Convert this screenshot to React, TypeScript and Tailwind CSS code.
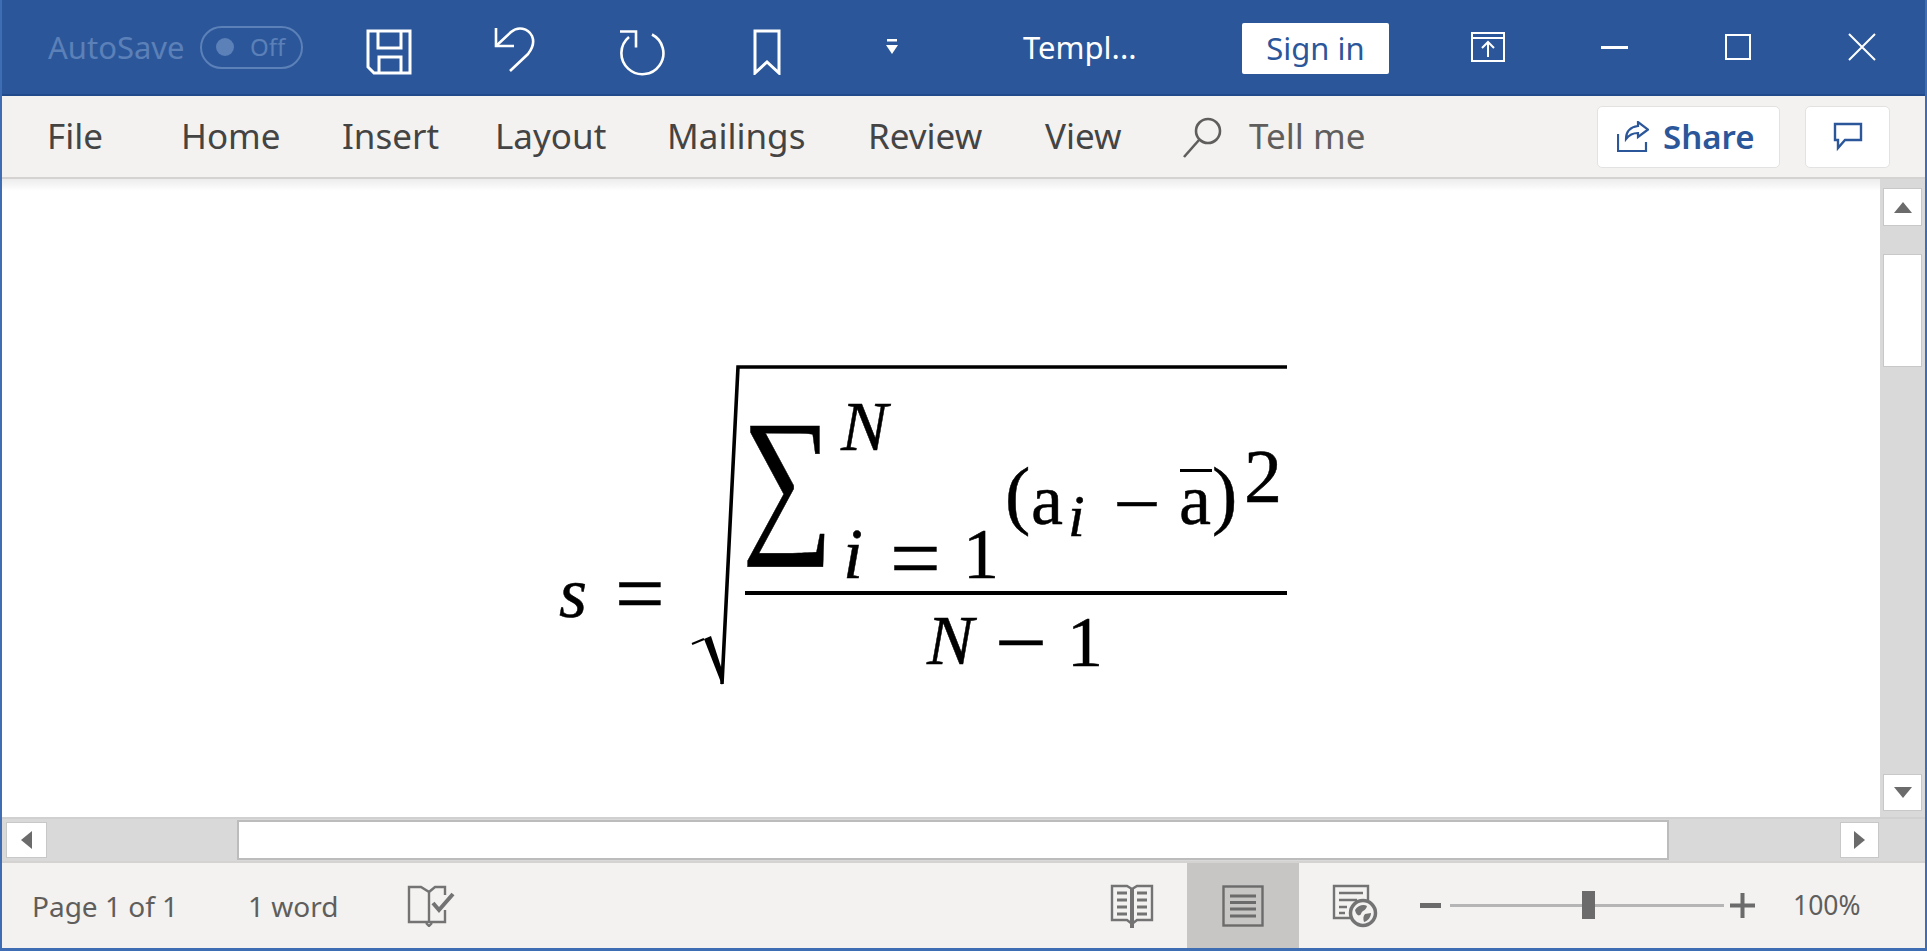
import React from 'react';

const ui = "font-['Noto_Sans','Open_Sans',sans-serif]";
const math = "absolute leading-none text-black font-['Liberation_Serif',serif] [-webkit-text-stroke:0.5px_black]";

const SaveIcon = () => (
  <svg width="46" height="46" viewBox="0 0 46 46" fill="none" stroke="white" strokeWidth="3">
    <path d="M2 2H44V44H8L2 38Z" />
    <path d="M12 2V19H35V2" />
    <path d="M13 44V28H35V44" />
  </svg>
);

const UndoIcon = () => (
  <svg width="46" height="50" viewBox="0 0 46 50" fill="none" stroke="white" strokeWidth="2.6">
    <path d="M4 3V21H22" />
    <path d="M4 21L19 7C26 1 36 3 40 11C43 18 40 24 36 29L18 46" />
  </svg>
);

const RedoIcon = () => (
  <svg width="48" height="50" viewBox="0 0 48 50" fill="none" stroke="white" strokeWidth="2.6">
    <path d="M2 5.5H18V21.5" />
    <path d="M11 11A21 21 0 1 0 34 8.5" />
  </svg>
);

const BookmarkIcon = () => (
  <svg width="28" height="46" viewBox="0 0 28 46" fill="none" stroke="white" strokeWidth="3">
    <path d="M2 2H26V44L14 33L2 44Z" />
  </svg>
);

const QuickDropIcon = () => (
  <svg width="12" height="16" viewBox="0 0 12 16" fill="white">
    <rect x="1" y="0" width="10" height="2.5" />
    <path d="M0 6H12L6 15Z" />
  </svg>
);

const RestoreIcon = () => (
  <svg width="34" height="30" viewBox="0 0 34 30" fill="none" stroke="white" strokeWidth="2">
    <rect x="1" y="1" width="32" height="28" />
    <path d="M1 6H33" />
    <path d="M17 25V11M11 16L17 10L23 16" />
  </svg>
);

const SearchIcon = () => (
  <svg width="42" height="42" viewBox="0 0 42 42" fill="none" stroke="#605e5c" strokeWidth="2.6">
    <circle cx="26" cy="15" r="12" />
    <path d="M17 24L2 41" />
  </svg>
);

const ShareIcon = () => (
  <svg width="32" height="32" viewBox="0 0 32 32" fill="none" stroke="#2b579a" strokeWidth="2.2">
    <path d="M1 13V30H29V21" />
    <path d="M9 18C9 10 14 6 21 5V1L31 8.5L21 16V12C16 12 12 14 9 18Z" />
  </svg>
);

const CommentIcon = () => (
  <svg width="30" height="30" viewBox="0 0 30 30" fill="none" stroke="#2b579a" strokeWidth="2.4">
    <path d="M2 2H28V18H12L5 26V18H2Z" />
  </svg>
);

const ProofIcon = () => (
  <svg width="48" height="42" viewBox="0 0 48 42" fill="none" stroke="#737373" strokeWidth="2.4">
    <path d="M22 37H2V2H14L22 7V37H38V25" />
    <path d="M22 7L28 2H38V10" />
    <path d="M26 18L32 25L46 9" strokeWidth="4" />
    <path d="M19 38L22 41L25 38" />
  </svg>
);

const ReadIcon = () => (
  <svg width="44" height="46" viewBox="0 0 44 46" fill="none" stroke="#737373" strokeWidth="2.4">
    <path d="M22 6L17 3H2V37H17L22 41L27 37H42V3H27Z" />
    <path d="M22 6V45" strokeWidth="4" />
    <path d="M7 10H17M7 17H17M7 24H17M7 31H17M27 10H37M27 17H37M27 24H37M27 31H37" strokeWidth="3" />
  </svg>
);

const PrintIcon = () => (
  <svg width="42" height="42" viewBox="0 0 42 42" fill="none" stroke="#6b6b6b" strokeWidth="2.4">
    <rect x="1.5" y="1.5" width="39" height="39" />
    <path d="M8 11H34M8 17.5H34M8 24H34M8 31H34" strokeWidth="3" />
  </svg>
);

const WebIcon = () => (
  <svg width="46" height="44" viewBox="0 0 46 44" fill="none">
    <path d="M22 34H2V2H36V16" stroke="#737373" strokeWidth="2.4" />
    <path d="M7 9H31M7 16H25M7 23H15M7 29H13" stroke="#737373" strokeWidth="2.4" />
    <circle cx="31" cy="29" r="12.5" fill="#f3f2f1" stroke="#737373" strokeWidth="3.5" />
    <path d="M23 26C26 21 32 20 35 22C34 27 30 26 29 30C27 33 24 31 23 26ZM33 30L39 29C39 33 36 37 32 38C31 35 31 32 33 30Z" fill="#737373" />
  </svg>
);

const ScrollButton = ({ dir, className }: { dir: 'up' | 'down' | 'left' | 'right'; className: string }) => {
  const paths = {
    up: 'M0 11L9 0L18 11Z',
    down: 'M0 0H18L9 11Z',
    left: 'M11 0V18L0 9Z',
    right: 'M0 0L11 9L0 18Z',
  };
  const horizontal = dir === 'left' || dir === 'right';
  return (
    <div className={`bg-white border border-[#c8c8c8] flex items-center justify-center ${className}`}>
      <svg width={horizontal ? 11 : 18} height={horizontal ? 18 : 11} fill="#6b6b6b">
        <path d={paths[dir]} />
      </svg>
    </div>
  );
};

const Formula = () => (
  <div className="relative w-[620px] h-[350px]">
    <svg className="absolute left-0 top-0" width="620" height="350" fill="none" stroke="black">
      <path d="M12 293L24 288" strokeWidth="2" />
      <path d="M24 288L31 285L44 325L42 334Z" fill="black" stroke="none" />
      <path d="M42 333L58 16H607" strokeWidth="3.6" />
    </svg>
    <div className="absolute left-[65px] top-[240px] w-[542px] h-[4px] bg-black" />

    <span className={`${math} left-[-121px] top-[206px] text-[72px] italic`}>s</span>
    <span className={`${math} left-[-65px] top-[199px] text-[88px]`}>=</span>

    <span className={`${math} left-[62px] top-[46px] text-[162px] scale-x-[0.79] origin-top-left`}>∑</span>
    <span className={`${math} left-[161px] top-[41px] text-[70px] italic`}>N</span>
    <span className={`${math} left-[163px] top-[167px] text-[72px] italic`}>i</span>
    <span className={`${math} left-[210px] top-[163px] text-[90px]`}>=</span>
    <span className={`${math} left-[283px] top-[167px] text-[72px]`}>1</span>

    <span className={`${math} left-[325px] top-[105px] text-[76px]`}>(</span>
    <span className={`${math} left-[351px] top-[113px] text-[72px]`}>a</span>
    <span className={`${math} left-[388px] top-[135px] text-[60px] italic`}>i</span>
    <span className={`${math} left-[438px] top-[107px] text-[76px]`}>–</span>
    <span className={`${math} left-[499px] top-[113px] text-[72px]`}>a</span>
    <div className="absolute left-[500px] top-[118px] w-[32px] h-[3px] bg-black" />
    <span className={`${math} left-[532px] top-[105px] text-[76px]`}>)</span>
    <span className={`${math} left-[564px] top-[87px] text-[76px]`}>2</span>

    <span className={`${math} left-[247px] top-[255px] text-[70px] italic`}>N</span>
    <span className={`${math} left-[320px] top-[242px] text-[84px]`}>–</span>
    <span className={`${math} left-[387px] top-[255px] text-[72px]`}>1</span>
  </div>
);

export default function App() {
  return (
    <div className={`${ui} w-[1927px] h-[951px] flex flex-col overflow-hidden bg-white border-x-2 border-b-[3px] border-[#3f6db3]`}>
      {/* Title bar */}
      <div className="h-[96px] shrink-0 bg-[#2b579a] border-b-2 border-[#214a8a] flex items-center pl-[46px] text-white">
        <span className="text-[31px] text-[#5c80b8] w-[152px]">AutoSave</span>
        <div className="w-[103px] h-[43px] rounded-full border-2 border-[#5c80b8] flex items-center pl-[14px] gap-[16px] text-[#5c80b8]">
          <span className="w-[18px] h-[18px] rounded-full bg-[#5c80b8]" />
          <span className="text-[24px]">Off</span>
        </div>
        <div className="ml-[63px] mt-[9px]"><SaveIcon /></div>
        <div className="ml-[80px] mt-[5px]"><UndoIcon /></div>
        <div className="ml-[80px] mt-[7px]"><RedoIcon /></div>
        <div className="ml-[87px] mt-[9px]"><BookmarkIcon /></div>
        <div className="ml-[105px]"><QuickDropIcon /></div>
        <span className="ml-[125px] w-[115px] text-[31px]">Templ...</span>
        <button className="ml-[104px] w-[147px] h-[51px] mt-[2px] bg-white rounded-[2px] text-[#2b579a] text-[31px] leading-none">Sign in</button>
        <div className="ml-[82px]"><RestoreIcon /></div>
        <div className="ml-[96px] w-[27px] h-[3px] bg-white" />
        <div className="ml-[97px] w-[26px] h-[26px] border-2 border-white" />
        <svg className="ml-[97px]" width="28" height="28" viewBox="0 0 28 28" stroke="white" strokeWidth="2">
          <path d="M1 1L27 27M27 1L1 27" />
        </svg>
      </div>

      {/* Ribbon tabs */}
      <div className="h-[83px] shrink-0 bg-[#f3f2f1] border-b-2 border-[#d4d3d2] flex items-center pl-[45px] pr-[35px] text-[35px] text-[#444444]">
        <span className="w-[134px]">File</span>
        <span className="w-[161px]">Home</span>
        <span className="w-[153px]">Insert</span>
        <span className="w-[172px]">Layout</span>
        <span className="w-[201px]">Mailings</span>
        <span className="w-[177px]">Review</span>
        <span className="w-[137px]">View</span>
        <SearchIcon />
        <span className="ml-[25px] text-[#605e5c]">Tell me</span>
        <button className="ml-auto w-[183px] h-[62px] bg-white border border-[#e3e2e1] rounded-[5px] flex items-center pl-[19px] gap-[14px] text-[#2b579a] font-semibold leading-none">
          <ShareIcon />
          <span className="text-[33px]">Share</span>
        </button>
        <button className="ml-[25px] w-[85px] h-[62px] bg-white border border-[#e3e2e1] rounded-[5px] flex items-center justify-center">
          <CommentIcon />
        </button>
      </div>

      {/* Document */}
      <div className="flex-1 min-h-0 flex">
        <div className="flex-1 bg-gradient-to-b from-[#ececec] to-white to-[12px]">
          <div className="ml-[678px] mt-[172px] w-fit">
            <Formula />
          </div>
        </div>
        <div className="w-[45px] shrink-0 bg-[#d9d9d9] flex flex-col items-center pt-[9px] pb-[6px]">
          <ScrollButton dir="up" className="w-[39px] h-[38px]" />
          <div className="mt-[28px] w-[39px] h-[113px] bg-white border border-[#c8c8c8]" />
          <div className="flex-1" />
          <ScrollButton dir="down" className="w-[39px] h-[37px]" />
        </div>
      </div>

      {/* Horizontal scrollbar */}
      <div className="h-[44px] shrink-0 bg-[#d9d9d9] border-t-2 border-[#d0d0d0] flex items-center pl-[4px] pr-[46px]">
        <ScrollButton dir="left" className="w-[41px] h-[36px]" />
        <div className="ml-[190px] w-[1432px] h-[40px] bg-white border-2 border-[#bcbcbc]" />
        <div className="flex-1" />
        <ScrollButton dir="right" className="w-[39px] h-[36px]" />
      </div>

      {/* Status bar */}
      <div className="h-[87px] shrink-0 bg-[#f3f2f1] border-t-2 border-[#d4d3d2] flex items-center pl-[30px] text-[28px] text-[#605e5c]">
        <span className="w-[216px]">Page 1 of 1</span>
        <span className="w-[159px]">1 word</span>
        <ProofIcon />
        <div className="ml-[655px]"><ReadIcon /></div>
        <div className="ml-[33px] w-[112px] h-full bg-[#c8c6c4] flex items-center justify-center"><PrintIcon /></div>
        <div className="ml-[33px]"><WebIcon /></div>
        <div className="ml-[42px] w-[21px] h-[5px] bg-[#6b6b6b]" />
        <div className="relative ml-[9px] w-[274px] h-[3px] bg-[#b5b5b5]">
          <div className="absolute left-[132px] top-[-13px] w-[13px] h-[28px] bg-[#6b6b6b]" />
        </div>
        <svg className="ml-[6px]" width="25" height="25" viewBox="0 0 25 25" stroke="#6b6b6b" strokeWidth="4">
          <path d="M0 12.5H25M12.5 0V25" />
        </svg>
        <span className="ml-[38px] text-[26.5px]">100%</span>
      </div>
    </div>
  );
}
